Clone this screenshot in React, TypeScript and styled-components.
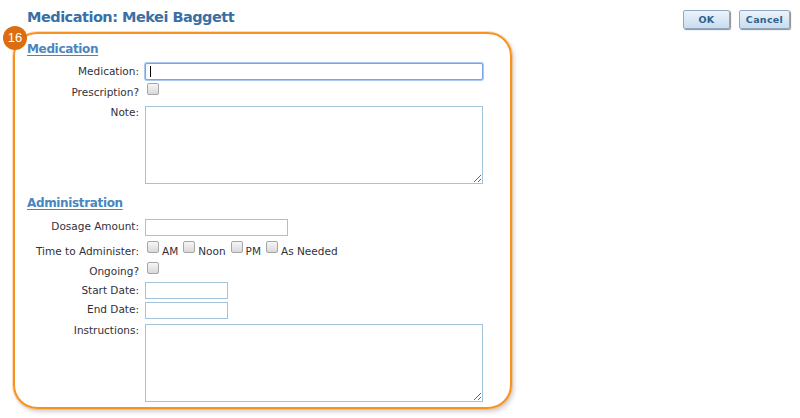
import React from "react";
import styled, { createGlobalStyle } from "styled-components";

const GlobalStyle = createGlobalStyle`
  html, body {
    margin: 0;
    padding: 0;
    background: #ffffff;
    font-family: "DejaVu Sans", Verdana, sans-serif;
  }
`;

const Page = styled.div`
  display: flex;
  justify-content: space-between;
  align-items: flex-start;
  width: 800px;
  height: 418px;
  padding: 9px 10px 0 0;
  box-sizing: border-box;
`;

const Main = styled.div`
  display: flex;
  flex-direction: column;
`;

const Title = styled.h1`
  margin: 0 0 0 27px;
  font-size: 14.5px;
  line-height: 17px;
  font-weight: bold;
  letter-spacing: -0.5px;
  color: #3a6fa6;
`;

const FormBox = styled.div`
  position: relative;
  margin: 6px 0 0 13px;
  width: 499px;
  box-sizing: border-box;
  padding: 8px 0 5px 12px;
  border: 2px solid #f7921e;
  border-radius: 24px;
  box-shadow: 0 0 0 1px rgba(248, 160, 60, 0.35), 2px 3px 4px rgba(0, 0, 0, 0.18);
`;

const Badge = styled.div`
  position: absolute;
  left: -12px;
  top: -8px;
  width: 24px;
  height: 24px;
  border-radius: 50%;
  background: #dc6d10;
  color: #ffffff;
  font-family: "Liberation Sans", Arial, sans-serif;
  font-size: 13px;
  line-height: 24px;
  text-align: center;
`;

const SectionTitle = styled.h2<{ $mt?: number }>`
  margin: ${({ $mt }) => $mt ?? 0}px 0 0 0;
  font-size: 12px;
  line-height: 15px;
  font-weight: bold;
  letter-spacing: -0.35px;
  color: #4a86be;
  text-decoration: underline;
  text-underline-offset: 2px;
`;

const Row = styled.div<{ $mt: number }>`
  display: flex;
  align-items: flex-start;
  margin-top: ${({ $mt }) => $mt}px;
`;

const Label = styled.label<{ $pt?: number }>`
  width: 112px;
  flex: none;
  padding-top: ${({ $pt }) => $pt ?? 0}px;
  margin-right: 6px;
  text-align: right;
  font-size: 10.5px;
  line-height: 12px;
  color: #33303a;
  white-space: nowrap;
`;

const TextInput = styled.div<{ $w: number; $focused?: boolean }>`
  position: relative;
  width: ${({ $w }) => $w}px;
  height: 17px;
  box-sizing: border-box;
  border: 1px solid ${({ $focused }) => ($focused ? "#7ba6e6" : "#a3c3da")};
  box-shadow: ${({ $focused }) => ($focused ? "0 0 0 1px #a9c8f2" : "none")};
  border-radius: ${({ $focused }) => ($focused ? "2px" : "0")};
  background: #ffffff;
`;

const Caret = styled.span`
  position: absolute;
  left: 4px;
  top: 2px;
  width: 1px;
  height: 11px;
  background: #000000;
`;

const TextArea = styled.textarea<{ $w: number }>`
  display: block;
  width: ${({ $w }) => $w}px;
  height: 78px;
  margin: 0;
  padding: 2px;
  box-sizing: border-box;
  border: 1px solid #a3c3da;
  font-family: "DejaVu Sans", Verdana, sans-serif;
  font-size: 11px;
  outline: none;
`;

const CheckBox = styled.span`
  display: inline-block;
  flex: none;
  width: 12px;
  height: 12px;
  margin: 0 3px 0 2px;
  box-sizing: border-box;
  border: 1px solid #a6a6a6;
  border-radius: 2px;
  background: linear-gradient(#f6f6f6, #d9d9d9);
`;

const Options = styled.div`
  display: flex;
  align-items: flex-start;
`;

const OptionText = styled.span`
  margin: 4px 3px 0 0;
  font-size: 10.5px;
  line-height: 12px;
  color: #33303a;
`;

const Buttons = styled.div`
  display: flex;
  gap: 9px;
  padding-top: 1px;
`;

const Button = styled.button<{ $w: number }>`
  width: ${({ $w }) => $w}px;
  height: 19px;
  padding: 0;
  border: 1px solid #8fa8bf;
  border-radius: 2px;
  background: linear-gradient(#eaf3fb, #c8ddef);
  box-shadow: 1px 1px 1px #8d8d8d;
  font-family: "DejaVu Sans", Verdana, sans-serif;
  font-size: 9.5px;
  font-weight: bold;
  letter-spacing: 0.3px;
  color: #2f5f8c;
`;

const times = ["AM", "Noon", "PM", "As Needed"];

export default function App() {
  return (
    <>
      <GlobalStyle />
      <Page>
        <Main>
          <Title>Medication: Mekei Baggett</Title>
          <FormBox>
            <Badge>16</Badge>
            <SectionTitle>Medication</SectionTitle>
            <Row $mt={6}>
              <Label $pt={2}>Medication:</Label>
              <TextInput $w={338} $focused>
                <Caret />
              </TextInput>
            </Row>
            <Row $mt={3}>
              <Label $pt={3}>Prescription?</Label>
              <CheckBox />
            </Row>
            <Row $mt={8}>
              <Label>Note:</Label>
              <TextArea $w={338} />
            </Row>

            <SectionTitle $mt={12}>Administration</SectionTitle>
            <Row $mt={8}>
              <Label $pt={1}>Dosage Amount:</Label>
              <TextInput $w={143} />
            </Row>
            <Row $mt={5}>
              <Label $pt={4}>Time to Administer:</Label>
              <Options>
                {times.map((t) => (
                  <React.Fragment key={t}>
                    <CheckBox />
                    <OptionText>{t}</OptionText>
                  </React.Fragment>
                ))}
              </Options>
            </Row>
            <Row $mt={5}>
              <Label $pt={3}>Ongoing?</Label>
              <CheckBox />
            </Row>
            <Row $mt={5}>
              <Label $pt={2}>Start Date:</Label>
              <TextInput $w={83} />
            </Row>
            <Row $mt={3}>
              <Label $pt={1}>End Date:</Label>
              <TextInput $w={83} />
            </Row>
            <Row $mt={5}>
              <Label>Instructions:</Label>
              <TextArea $w={338} />
            </Row>
          </FormBox>
        </Main>
        <Buttons>
          <Button $w={47}>OK</Button>
          <Button $w={51}>Cancel</Button>
        </Buttons>
      </Page>
    </>
  );
}
